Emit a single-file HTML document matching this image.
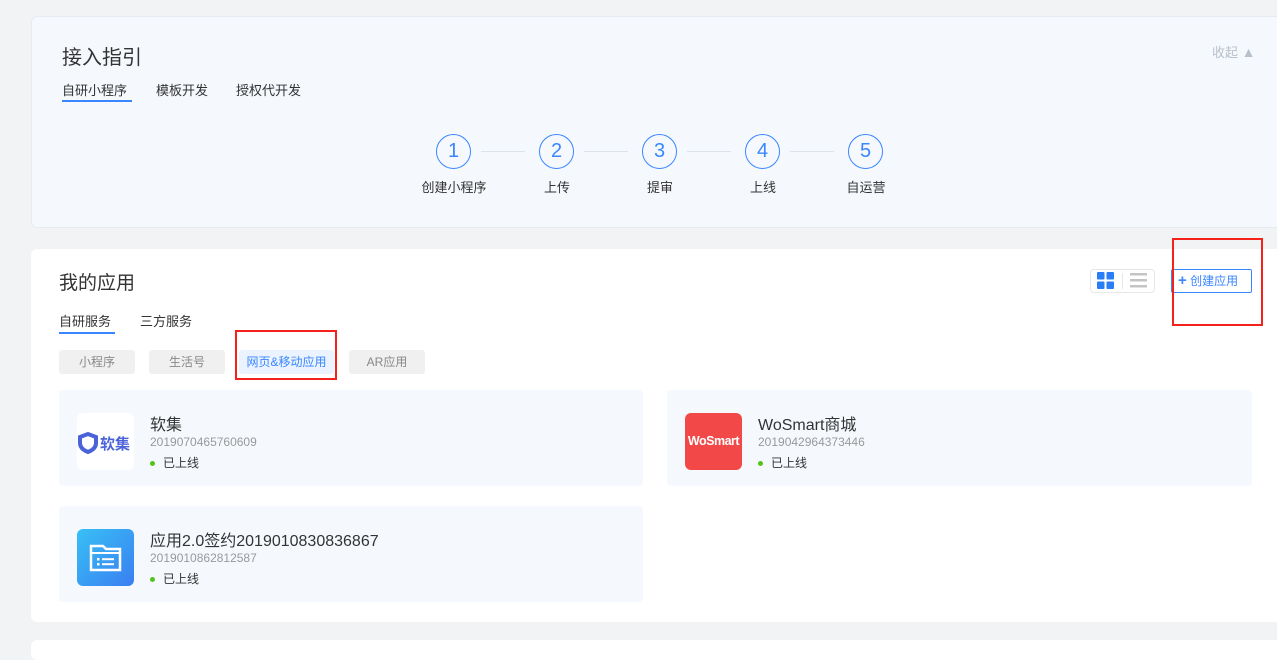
<!DOCTYPE html>
<html><head><meta charset="utf-8"><style>
*{margin:0;padding:0;box-sizing:border-box}
body{width:1277px;height:643px;background:#f2f3f5;font-family:"Liberation Sans","Noto Sans CJK SC",sans-serif;position:relative;overflow:hidden;color:#333}
.abs{position:absolute}
.c1{left:31px;top:16px;width:1260px;height:212px;background:#f5f9fe;border:1px solid #e6ebf2;border-radius:6px}
.c2{left:31px;top:249px;width:1260px;height:373px;background:#fff;border-radius:6px}
.c3{left:31px;top:640px;width:1260px;height:20px;background:#fff;border-radius:6px}
.circ{width:35px;height:35px;border:1.5px solid #3a86ff;border-radius:50%;color:#3a86ff;font-size:20px;text-align:center;line-height:32px;top:134px}
.line{top:151px;height:1px;background:#dde3ea;width:44px}
.lbl{top:177px;font-size:13px;color:#333;width:100px;text-align:center}
.pill{top:350px;height:24px;background:#f0f0f0;border-radius:3px;font-size:12px;color:#888;text-align:center;line-height:24px}
.card{background:#f5f9fe;border-radius:4px;width:584px;height:96px}
.ico{left:18px;top:23px;width:57px;height:57px;border-radius:6px}
.nm{left:91px;top:21px;font-size:16px;color:#333}
.id{left:91px;top:45px;font-size:12px;color:#999}
.st{left:91px;top:64px;font-size:12px;color:#333}
.st:before{content:"";display:inline-block;width:5px;height:5px;border-radius:50%;background:#52c41a;margin-right:8px;vertical-align:middle}
.red{border:2px solid #f5221b}
</style></head><body>
<div class="abs c1"></div>
<div class="abs" style="left:62px;top:41px;font-size:20px;color:#333">接入指引</div>
<div class="abs" style="left:1212px;top:42px;font-size:13px;color:#b8c0cc">收起 <span style="font-size:14px">▲</span></div>
<div class="abs" style="left:62px;top:80px;font-size:13px;color:#333">自研小程序</div>
<div class="abs" style="left:62px;top:100px;width:70px;height:2px;background:#3a86ff"></div>
<div class="abs" style="left:156px;top:80px;font-size:13px;color:#333">模板开发</div>
<div class="abs" style="left:236px;top:80px;font-size:13px;color:#333">授权代开发</div>
<div class="abs circ" style="left:436px">1</div><div class="abs line" style="left:481px"></div>
<div class="abs circ" style="left:539px">2</div><div class="abs line" style="left:584px"></div>
<div class="abs circ" style="left:642px">3</div><div class="abs line" style="left:687px"></div>
<div class="abs circ" style="left:745px">4</div><div class="abs line" style="left:790px"></div>
<div class="abs circ" style="left:848px">5</div>
<div class="abs lbl" style="left:404px">创建小程序</div>
<div class="abs lbl" style="left:507px">上传</div>
<div class="abs lbl" style="left:610px">提审</div>
<div class="abs lbl" style="left:713px">上线</div>
<div class="abs lbl" style="left:816px">自运营</div>

<div class="abs c2"></div>
<div class="abs c3"></div>
<div class="abs" style="left:59px;top:268px;font-size:19px;color:#333">我的应用</div>
<div class="abs" style="left:59px;top:311px;font-size:13px;color:#333">自研服务</div>
<div class="abs" style="left:59px;top:332px;width:56px;height:2px;background:#3a86ff"></div>
<div class="abs" style="left:140px;top:311px;font-size:13px;color:#333">三方服务</div>
<div class="abs pill" style="left:59px;width:76px">小程序</div>
<div class="abs pill" style="left:149px;width:76px">生活号</div>
<div class="abs pill" style="left:239px;width:95px;background:#eaf3ff;color:#3a86ff">网页&amp;移动应用</div>
<div class="abs pill" style="left:349px;width:76px">AR应用</div>
<div class="abs red" style="left:235px;top:330px;width:102px;height:50px"></div>

<div class="abs" style="left:1090px;top:269px;width:65px;height:24px;border:1px solid #e5e7eb;border-radius:4px;background:#fff"></div>
<svg class="abs" style="left:1097px;top:272px" width="18" height="18"><rect x="0" y="0" width="7.5" height="7.5" rx="1" fill="#2a7cf7"/><rect x="9.5" y="0" width="7.5" height="7.5" rx="1" fill="#2a7cf7"/><rect x="0" y="9.5" width="7.5" height="7.5" rx="1" fill="#2a7cf7"/><rect x="9.5" y="9.5" width="7.5" height="7.5" rx="1" fill="#2a7cf7"/></svg>
<div class="abs" style="left:1122px;top:273px;width:1px;height:16px;background:#e5e7eb"></div>
<svg class="abs" style="left:1130px;top:273px" width="18" height="16"><rect y="0" width="17" height="2.5" fill="#c4c4c4"/><rect y="6" width="17" height="2.5" fill="#c4c4c4"/><rect y="12" width="17" height="2.5" fill="#c4c4c4"/></svg>
<div class="abs" style="left:1171px;top:269px;width:81px;height:24px;border:1px solid #3a86ff;border-radius:2px;background:#fff;color:#3a86ff;font-size:12px;line-height:22px;padding-left:6px"><b style="font-size:15px">+</b> 创建应用</div>
<div class="abs red" style="left:1172px;top:238px;width:91px;height:88px"></div>

<div class="abs card" style="left:59px;top:390px">
 <div class="abs ico" style="background:#fff"><svg width="57" height="57"><path d="M3 24 L11 21 L19 24 L19 30 Q19 36 11 39 Q3 36 3 30Z" fill="none" stroke="#4b63d8" stroke-width="4"/><text x="23" y="36" font-size="15" font-weight="bold" fill="#4b63d8" font-family="Noto Sans CJK SC">软集</text></svg></div>
 <div class="abs nm">软集</div><div class="abs id">2019070465760609</div><div class="abs st">已上线</div>
</div>
<div class="abs card" style="left:667px;top:390px;width:585px">
 <div class="abs ico" style="background:#f34848;color:#fff;font-size:12.5px;font-weight:bold;text-align:center;line-height:57px;letter-spacing:-0.5px">WoSmart</div>
 <div class="abs nm">WoSmart商城</div><div class="abs id">2019042964373446</div><div class="abs st">已上线</div>
</div>
<div class="abs card" style="left:59px;top:506px">
 <div class="abs ico" style="background:linear-gradient(135deg,#38c0f5,#3a7ef2)"><svg width="57" height="57"><path d="M14 17 H26 L29 20 H43 V41 H14 Z" fill="none" stroke="#fff" stroke-width="2.5"/><line x1="14" y1="24" x2="43" y2="24" stroke="#fff" stroke-width="2"/><rect x="20" y="29" width="2.5" height="2.5" fill="#fff"/><rect x="20" y="34" width="2.5" height="2.5" fill="#fff"/><line x1="25" y1="30.2" x2="37" y2="30.2" stroke="#fff" stroke-width="2"/><line x1="25" y1="35.2" x2="37" y2="35.2" stroke="#fff" stroke-width="2"/></svg></div>
 <div class="abs nm">应用2.0签约2019010830836867</div><div class="abs id">2019010862812587</div><div class="abs st">已上线</div>
</div>
</body></html>
